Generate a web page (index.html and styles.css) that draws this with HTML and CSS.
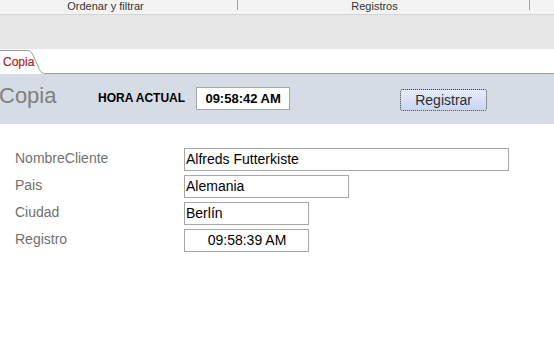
FILE: index.html
```html
<!DOCTYPE html>
<html lang="es">
<head>
    <meta charset="UTF-8">
    <title>Copia</title>
    <link rel="stylesheet" href="styles.css">
</head>
<body>
    <div class="ribbon">
        <div class="group group-sort"><span>Ordenar y filtrar</span></div>
        <span class="sep"></span>
        <div class="group group-records"><span>Registros</span></div>
        <span class="sep"></span>
        <div class="group group-rest"></div>
    </div>
    <div class="ribbon-space"></div>

    <div class="tabs">
        <div class="tab">
            <svg class="tab-shape" width="46" height="25" viewBox="0 0 46 25">
                <path d="M0 1.5 H27 C30 1.5 31.5 3 33 6 L39.5 20.5 C41 23.5 42.5 24.5 46 24.5" fill="none" stroke="#9c9c9c" stroke-width="1"/>
            </svg>
            <span class="tab-label">Copia</span>
        </div>
        <div class="tab-fill"></div>
    </div>

    <div class="header-band">
        <div class="form-title">Copia</div>
        <div class="clock-label">HORA ACTUAL</div>
        <div class="clock-box">09:58:42 AM</div>
        <button class="register-button">Registrar</button>
    </div>

    <div class="form">
        <label class="field-label">NombreCliente</label>
        <div class="field-box w-long">Alfreds Futterkiste</div>

        <label class="field-label">Pais</label>
        <div class="field-box w-mid">Alemania</div>

        <label class="field-label">Ciudad</label>
        <div class="field-box w-short">Berlín</div>

        <label class="field-label">Registro</label>
        <div class="field-box w-short centered">09:58:39 AM</div>
    </div>
</body>
</html>
```

FILE: styles.css
```css
:root {
    --band-color: #d6dce5;
    --box-border: #a6a6a6;
    --label-color: #707070;
}

body {
    margin: 0;
    font-family: 'Liberation Sans', Arial, sans-serif;
    background-color: white;
    color: black;
}

/* ribbon */
.ribbon {
    display: flex;
    height: 14px;
    background-color: #f3f3f3;
    border-bottom: 1px solid #d4d4d4;
    font-size: 11px;
    line-height: 13px;
    color: #333;
}

.group {
    display: flex;
    justify-content: center;
}

.group-sort {
    width: 237px;
    padding-right: 26px;
    box-sizing: border-box;
}

.group-records {
    width: 291px;
    padding-right: 18px;
    box-sizing: border-box;
}

.group-rest {
    flex: 1;
}

.sep {
    width: 1px;
    height: 10px;
    background-color: #a3a3a3;
}

.ribbon-space {
    height: 34px;
    background-color: #e6e6e6;
}

/* tabs */
.tabs {
    display: flex;
    height: 25px;
    background-color: white;
}

.tab {
    position: relative;
    width: 46px;
}

.tab-shape {
    position: absolute;
    left: 0;
    top: 0;
}

.tab-label {
    position: relative;
    display: block;
    padding: 6px 0 0 3px;
    font-size: 12px;
    line-height: 14px;
    color: #a8242e;
    -webkit-text-stroke: 0.2px #a8242e;
}

.tab-fill {
    flex: 1;
    border-bottom: 1px solid #9c9c9c;
}

/* header band */
.header-band {
    display: flex;
    align-items: flex-start;
    height: 50px;
    background-color: var(--band-color);
}

.form-title {
    width: 99px;
    margin: 9px 0 0 -1px;
    font-size: 22px;
    line-height: 26px;
    color: #808080;
}

.clock-label {
    margin-top: 17px;
    font-size: 12px;
    line-height: 14px;
    font-weight: bold;
}

.clock-box {
    width: 94px;
    height: 23px;
    box-sizing: border-box;
    margin: 13px 0 0 11px;
    border: 1px solid var(--box-border);
    background-color: white;
    font-size: 13px;
    line-height: 21px;
    font-weight: bold;
    text-align: center;
}

.register-button {
    width: 87px;
    height: 22px;
    margin: 15px 0 0 110px;
    padding: 0;
    border: 1px dotted #3c3c3c;
    border-radius: 3px;
    background: linear-gradient(#e6ecf9, #c8d6f3);
    font-family: inherit;
    font-size: 14px;
    color: #2e2e2e;
}

/* form fields */
.form {
    display: grid;
    grid-template-columns: 169px auto;
    row-gap: 4px;
    padding: 24px 0 0 15px;
}

.field-label {
    padding-top: 2px;
    font-size: 14px;
    line-height: 17px;
    color: var(--label-color);
}

.field-box {
    height: 23px;
    box-sizing: border-box;
    padding-left: 1px;
    border: 1px solid var(--box-border);
    font-size: 14px;
    line-height: 21px;
}

.w-long {
    width: 325px;
}

.w-mid {
    width: 165px;
}

.w-short {
    width: 125px;
}

.centered {
    text-align: center;
}
```
